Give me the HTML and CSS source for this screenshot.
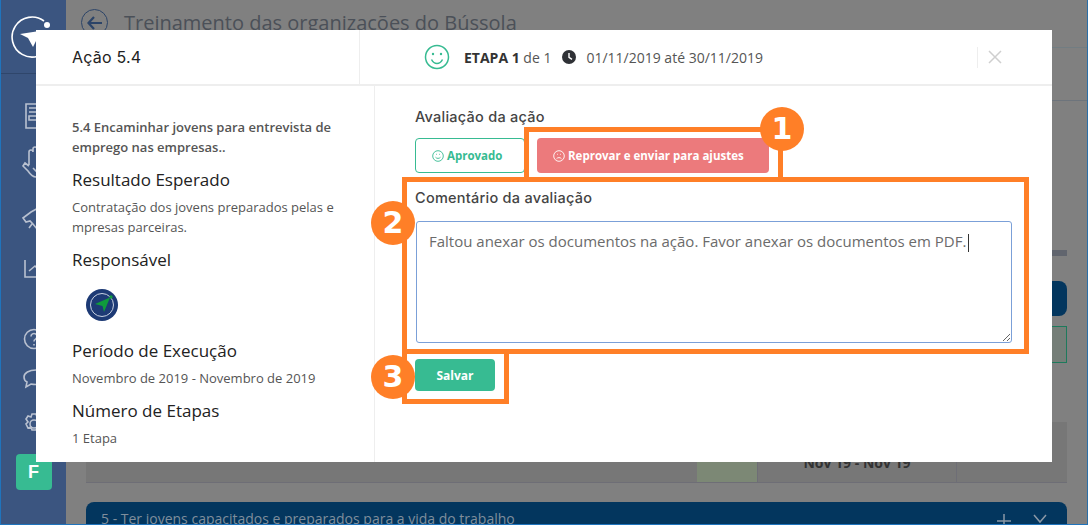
FILE: index.html
```html
<!DOCTYPE html>
<html lang="pt-br">
<head>
  <meta charset="UTF-8" />
  <meta name="viewport" content="width=device-width, initial-scale=1.0"/>
  <title>Avaliação da ação | Bússola</title>
  <link rel="stylesheet" href="styles.css">
</head>
<body>
  <div class="pagina">
    <aside class="sidebar">
      <div class="sidebar-logo">
        <svg width="48" height="48" viewBox="0 0 48 48">
          <path d="M34 8A20 20 0 1 0 40 33" fill="none" stroke="#fff" stroke-width="1.600"/>
          <circle cx="37" cy="12" r="3" fill="#fff"/>
          <path d="M10 21L36 17 27 26 23 34 18 25Z" fill="#fff"/>
        </svg>
      </div>
      <nav class="sidebar-nav">
        <svg class="icone icone-doc" width="28" height="26" viewBox="0 0 28 26">
          <path d="M3 1h20v24H3z M6 5h9 M6 9h9 M6 13h20v4H6z M16 21h6"/>
        </svg>
        <svg class="icone icone-mao" width="30" height="34" viewBox="0 0 30 34">
          <path d="M8 20V7a2 2 0 0 1 4 0V4a2 2 0 0 1 4 0v2a2 2 0 0 1 4 0v2a2 2 0 0 1 4 0v14c0 6-4 10-9 10-4 0-6-3-8-6l-5-5 2-3 4 3"/>
          <path d="M12 23l3 3 5-5"/>
        </svg>
        <svg class="icone icone-foguete" width="30" height="26" viewBox="0 0 30 26">
          <path d="M2 13l8-6 9-5 9-1-2 9-6 8-4 6-4-5-3-3-4 1z M11 19l-3 4"/>
        </svg>
        <svg class="icone icone-grafico" width="30" height="19" viewBox="0 0 30 19">
          <path d="M2 1v17h27 M6 12l6-5 4 4 5-5 7 5"/>
        </svg>
        <svg class="icone icone-ajuda" width="22" height="22" viewBox="0 0 22 22">
          <circle cx="11" cy="11" r="9.500"/>
          <path d="M8 8.500a3 3 0 1 1 4.500 2.600c-1 .6-1.500 1.200-1.500 2.400 M11 16v1.500"/>
        </svg>
        <svg class="icone icone-chat" width="28" height="20" viewBox="0 0 28 20">
          <path d="M14 1C7 1 2 4 2 8c0 2 1 4 3 5l-1 5 5-3c2 .5 3 .5 5 .5 7 0 12-3 12-7.500S21 1 14 1z"/>
        </svg>
        <svg class="icone icone-config" width="24" height="22" viewBox="0 0 24 22">
          <circle cx="12" cy="11" r="4"/>
          <path d="M10 1h4l1 3 3-1 2 3-2 3 2 2-2 4-3-1-1 3h-4l-1-3-3 1-2-4 2-2-2-3 2-3 3 1z"/>
        </svg>
        <div class="avatar-usuario">F</div>
      </nav>
    </aside>

    <main class="conteudo">
      <header class="topo">
        <span class="voltar">
          <svg width="16" height="14" viewBox="0 0 16 14"><path d="M7 1L1.500 7 7 13M2 7h13" fill="none" stroke="#2c4468" stroke-width="2.200"/></svg>
        </span>
        <h1>Treinamento das organizações do Bússola</h1>
      </header>
      <div class="abas"></div>
      <div class="blocos">
        <div class="barra-cinza"></div>
        <div class="botao-azul"></div>
        <div class="caixa-verde"></div>
        <div class="tabela-linha">
          <div></div>
          <div class="celula-verde"></div>
          <div class="celula-data">Nov 19 - Nov 19</div>
          <div></div>
        </div>
        <div class="objetivo">
          <span>5 - Ter jovens capacitados e preparados para a vida do trabalho</span>
          <span class="objetivo-acoes">
            <svg width="14" height="14" viewBox="0 0 14 14"><path d="M7 0v14M0 7h14" stroke="#8b98a6" stroke-width="1.500"/></svg>
            <svg width="14" height="10" viewBox="0 0 14 10"><path d="M1 1l6 7 6-7" fill="none" stroke="#8b98a6" stroke-width="1.500"/></svg>
          </span>
        </div>
      </div>
    </main>
  </div>

  <section class="modal">
    <header class="modal-topo">
      <div class="modal-titulo">Ação 5.4</div>
      <div class="modal-etapa">
        <svg class="etapa-carinha" width="26" height="26" viewBox="0 0 26 26">
          <circle cx="13" cy="13" r="11.500"/>
          <circle class="olho" cx="9" cy="10" r="1.200"/>
          <circle class="olho" cx="17" cy="10" r="1.200"/>
          <path d="M7.500 15.500c1.500 3 3.500 4 5.500 4s4-1 5.500-4"/>
        </svg>
        <span class="etapa-texto"><strong>ETAPA 1</strong> de 1</span>
        <svg class="etapa-relogio" width="14" height="14" viewBox="0 0 14 14">
          <circle cx="7" cy="7" r="7" fill="#2f3136"/>
          <path d="M7 3v4.300l3 2" fill="none" stroke="#fff" stroke-width="1.400"/>
        </svg>
        <span class="etapa-data">01/11/2019 até 30/11/2019</span>
      </div>
      <div class="modal-fechar">
        <svg width="14" height="14" viewBox="0 0 14 14"><path d="M1 1l12 12M13 1L1 13" stroke="#cfcfcf" stroke-width="1.500"/></svg>
      </div>
    </header>

    <div class="modal-corpo">
      <div class="detalhes">
        <p class="descricao">5.4 Encaminhar jovens para entrevista de emprego nas empresas..</p>
        <h3>Resultado Esperado</h3>
        <p>Contratação dos jovens preparados pelas e<br>mpresas parceiras.</p>
        <h3>Responsável</h3>
        <svg class="responsavel" width="32" height="32" viewBox="0 0 32 32">
          <circle cx="16" cy="16" r="16" fill="#1d3a75"/>
          <circle cx="16" cy="16" r="11.500" fill="none" stroke="#c9d2e2" stroke-width="1"/>
          <path d="M9 15L24 8.500 18 23 16.500 17z" fill="#0f9b3c"/>
          <circle cx="25" cy="8" r="1.700" fill="#0f9b3c"/>
        </svg>
        <h3>Período de Execução</h3>
        <p>Novembro de 2019 - Novembro de 2019</p>
        <h3>Número de Etapas</h3>
        <p>1 Etapa</p>
      </div>

      <form class="avaliacao">
        <label class="rotulo">Avaliação da ação</label>
        <div class="opcoes">
          <button type="button" class="opcao opcao-aprovado">
            <svg width="12" height="12" viewBox="0 0 12 12">
              <circle cx="6" cy="6" r="5.300"/>
              <path d="M3.500 7.200c1.200 1.600 3.800 1.600 5 0 M4 4.300h.8 M7.200 4.300H8"/>
            </svg>
            Aprovado
          </button>
          <button type="button" class="opcao opcao-reprovar">
            <svg width="12" height="12" viewBox="0 0 12 12">
              <circle cx="6" cy="6" r="5.300"/>
              <path d="M3.500 8.800c1.200-1.600 3.800-1.600 5 0 M4 4.300h.8 M7.200 4.300H8"/>
            </svg>
            Reprovar e enviar para ajustes
          </button>
        </div>
        <label class="rotulo rotulo-comentario" for="comentario">Comentário da avaliação</label>
        <textarea id="comentario" class="comentario">Faltou anexar os documentos na ação. Favor anexar os documentos em PDF.</textarea>
        <button type="button" class="salvar">Salvar</button>
      </form>
    </div>
  </section>

  <!-- marcacoes do tutorial -->
  <div class="cursor-texto"></div>
  <div class="marca marca-1"></div>
  <div class="marca marca-2"></div>
  <div class="marca marca-3"></div>
  <div class="numero numero-1">1</div>
  <div class="numero numero-2">2</div>
  <div class="numero numero-3">3</div>
</body>
</html>
```

FILE: styles.css
```css
html, body {
  margin: 0;
  padding: 0;
  overflow: hidden;
}

body {
  position: relative;
  width: 1088px;
  height: 525px;
  font-family: 'Open Sans', sans-serif;
  color: #555;
}

.pagina {
  display: flex;
  box-sizing: border-box;
  width: 1088px;
  height: 525px;
  background-color: #808080;
  border-left: 1px solid #1f74bd;
  border-right: 1px solid #2a6fa8;
  border-bottom: 1px solid #1f74bd;
  overflow: hidden;
}

/* menu lateral */
.sidebar {
  flex: 0 0 65px;
  background-color: #3b5580;
}

.sidebar-logo {
  height: 74px;
  box-sizing: border-box;
  padding: 13px 0 0 9px;
  border-bottom: 1px solid #2f466b;
}

.sidebar-nav {
  display: flex;
  flex-direction: column;
  align-items: center;
}

.icone {
  fill: none;
  stroke: #b9c1d0;
  stroke-width: 1.600;
  flex: none;
}

.icone-doc { margin-top: 29px; margin-left: 6px; }
.icone-mao { margin-top: 16px; margin-left: 4px; }
.icone-foguete { margin-top: 26px; margin-left: 4px; }
.icone-grafico { margin-top: 28px; margin-left: 8px; }
.icone-ajuda { margin-top: 50px; margin-left: 0; }
.icone-chat { margin-top: 19px; margin-left: 4px; }
.icone-config { margin-top: 24px; margin-left: 0; }

.avatar-usuario {
  width: 36px;
  height: 36px;
  margin-top: 19px;
  border-radius: 4px;
  background-color: #37bb92;
  color: #fff;
  font-family: 'Liberation Sans', sans-serif;
  font-weight: bold;
  font-size: 18px;
  line-height: 36px;
  text-align: center;
}

/* conteudo atras do modal */
.conteudo {
  flex: 1;
  min-width: 0;
}

.topo {
  display: flex;
  align-items: center;
  gap: 16px;
  height: 48px;
  box-sizing: border-box;
  padding: 0 0 2px 15px;
  border-bottom: 1px solid #727d82;
}

.voltar {
  display: flex;
  align-items: center;
  justify-content: center;
  width: 25px;
  height: 25px;
  border: 1.500px solid #2c4468;
  border-radius: 50%;
}

.topo h1 {
  margin: 0;
  font-size: 20px;
  font-weight: 400;
  color: #4b5058;
}

.abas {
  height: 52px;
  border-bottom: 1px solid #6d747c;
}

.blocos {
  padding: 149px 20px 0;
}

.barra-cinza {
  height: 6px;
  background-color: #61656e;
}

.botao-azul {
  height: 35px;
  margin-top: 25px;
  border-radius: 8px;
  background-color: #03365e;
}

.caixa-verde {
  height: 35px;
  margin-top: 10px;
  border: 1px solid #1d7a5c;
  background-color: #757e78;
}

.tabela-linha {
  display: grid;
  grid-template-columns: 1fr 60px 200px 110px;
  height: 60px;
  margin-top: 59px;
  background-color: #777;
  border-bottom: 1px solid #6e6e76;
}

.celula-verde {
  background-color: #7c8875;
}

.celula-data {
  padding-top: 31px;
  border-left: 1px solid #6e6e76;
  border-right: 1px solid #6e6e76;
  font-size: 14px;
  font-weight: 700;
  text-align: center;
  color: #333;
}

.objetivo {
  display: flex;
  justify-content: space-between;
  height: 40px;
  margin-top: 19px;
  padding: 7px 20px 0 15px;
  border-radius: 8px;
  background-color: #03365e;
  font-size: 14px;
  color: #7f8e9c;
}

.objetivo-acoes {
  display: flex;
  gap: 22px;
  padding-top: 4px;
}

.objetivo-acoes svg {
  margin-top: 1px;
}

/* modal */
.modal {
  position: absolute;
  left: 36px;
  top: 30px;
  width: 1016px;
  height: 432px;
  background-color: #fff;
  display: flex;
  flex-direction: column;
}

.modal-topo {
  display: flex;
  align-items: center;
  height: 56px;
  box-sizing: border-box;
  border-bottom: 2px solid #eee;
}

.modal-titulo {
  flex: 0 0 324px;
  height: 54px;
  box-sizing: border-box;
  padding-left: 36px;
  border-right: 1px solid #eee;
  font-family: 'Inter', sans-serif;
  font-size: 16px;
  line-height: 54px;
  letter-spacing: 0.200px;
  color: #222;
}

.modal-etapa {
  display: flex;
  align-items: center;
  flex: 1;
  padding-left: 64px;
  color: #555;
}

.etapa-carinha {
  fill: none;
  stroke: #37bb92;
  stroke-width: 1.500;
}

.etapa-carinha .olho {
  fill: #37bb92;
  stroke: none;
}

.etapa-texto {
  margin-left: 14px;
  font-size: 14px;
}

.etapa-texto strong {
  color: #333;
}

.etapa-relogio {
  margin-left: 11px;
}

.etapa-data {
  margin-left: 10px;
  font-size: 14px;
}

.modal-fechar {
  display: flex;
  align-items: center;
  height: 21px;
  margin-right: 50px;
  padding-left: 10px;
  border-left: 1px solid #eee;
}

.modal-corpo {
  display: flex;
  flex: 1;
  min-height: 0;
}

.detalhes {
  flex: 0 0 339px;
  box-sizing: border-box;
  padding: 31px 0 0 36px;
  border-right: 1px solid #eee;
}

.detalhes p {
  margin: 0;
  font-size: 13px;
  line-height: 20px;
  color: #555;
}

.detalhes .descricao {
  width: 270px;
  font-weight: 600;
}

.detalhes h3 {
  margin: 11px 0 5px;
  font-size: 17px;
  font-weight: 400;
  line-height: 24px;
  color: #222;
}

.responsavel {
  display: block;
  margin: 17px 0 18px 14px;
}

.avaliacao {
  flex: 1;
  padding: 21px 0 0 40px;
}

.rotulo {
  display: block;
  font-family: 'Inter', sans-serif;
  font-size: 14.500px;
  font-weight: 500;
  line-height: 20px;
  letter-spacing: 0.250px;
  color: #444;
}

.opcoes {
  display: flex;
  gap: 12px;
  margin-top: 11px;
}

.opcao {
  display: flex;
  align-items: center;
  gap: 3px;
  height: 35px;
  box-sizing: border-box;
  border-radius: 4px;
  font-family: 'Open Sans', sans-serif;
  font-size: 11.500px;
  font-weight: 700;
}

.opcao svg {
  fill: none;
  stroke-width: 0.900;
}

.opcao-aprovado {
  width: 110px;
  padding: 0 0 0 16px;
  background-color: #fff;
  border: 1px solid #37bb92;
  color: #37bb92;
}

.opcao-aprovado svg {
  stroke: #37bb92;
}

.opcao-reprovar {
  width: 232px;
  padding: 0 0 0 16px;
  background-color: #ec7a7c;
  border: none;
  color: #fff;
}

.opcao-reprovar svg {
  stroke: #fff;
}

.rotulo-comentario {
  margin-top: 15px;
}

.comentario {
  display: block;
  box-sizing: border-box;
  width: 596px;
  height: 122px;
  margin: 13px 0 0 1px;
  padding: 9px 12px;
  border: 1px solid #7ba0d8;
  border-radius: 3px;
  outline: none;
  font-family: 'Open Sans', sans-serif;
  font-size: 15px;
  line-height: 20px;
  color: #6b6b6b;
}

.salvar {
  display: block;
  width: 80px;
  height: 32px;
  margin-top: 16px;
  border: none;
  border-radius: 4px;
  background-color: #37bb92;
  color: #fff;
  font-family: 'Open Sans', sans-serif;
  font-size: 12px;
  font-weight: 700;
}

/* cursor do campo, parado como no print */
.cursor-texto {
  position: absolute;
  left: 968px;
  top: 234px;
  width: 1px;
  height: 18px;
  background-color: #333;
}

/* marcacoes laranja por cima do print */
.marca {
  position: absolute;
  box-sizing: border-box;
  border: 5px solid #ff7f27;
}

.marca-1 { left: 524px; top: 127px; width: 259px; height: 55px; }
.marca-2 { left: 402px; top: 177px; width: 627px; height: 177px; }
.marca-3 { left: 402px; top: 349px; width: 107px; height: 55px; }

.numero {
  position: absolute;
  width: 44px;
  height: 44px;
  border-radius: 50%;
  background-color: #ff7f27;
  color: #fff;
  font-family: 'DejaVu Sans', sans-serif;
  font-size: 30px;
  font-weight: 700;
  line-height: 44px;
  text-align: center;
}

.numero-1 { left: 760px; top: 107px; }
.numero-2 { left: 371px; top: 201px; }
.numero-3 { left: 371px; top: 355px; }
```
